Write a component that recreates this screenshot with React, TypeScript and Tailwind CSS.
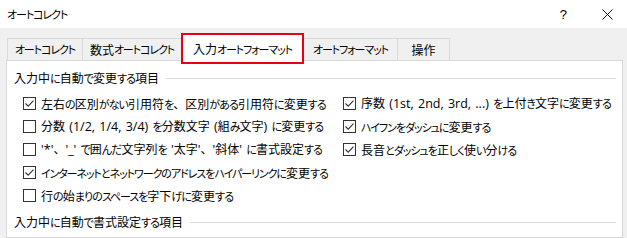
import React from "react";

function JP({ text }: { text: string }) {
  const parts = text.split(/([\u30A0-\u30FF]+|[\u3041-\u309F]+|[\x20-\x7E]+)/);
  return (
    <>
      {parts.map((p, i) => {
        if (p === "") return null;
        if (/^[\u30A0-\u30FF]+$/.test(p))
          return (
            <span key={i} className="text-[11px] tracking-[-1.1px] [font-feature-settings:'palt']">
              {p}
            </span>
          );
        if (/^[\u3041-\u309F]+$/.test(p))
          return (
            <span key={i} className="text-[11px] tracking-[-0.9px] [font-feature-settings:'palt']">
              {p}
            </span>
          );
        if (/^[\x20-\x7E]+$/.test(p))
          return (
            <span key={i} className="text-[12.5px] [word-spacing:1px]" style={{ fontFamily: '"Open Sans", sans-serif' }}>
              {p}
            </span>
          );
        return <span key={i}>{p}</span>;
      })}
    </>
  );
}

function Box({ checked }: { checked: boolean }) {
  return (
    <span className="w-[13px] h-[13px] border border-[#333333] bg-white flex items-center justify-center shrink-0">
      {checked && (
        <svg width="11" height="11" viewBox="0 0 11 11">
          <path d="M1.5 5.5 L4.2 8.2 L9.5 2.6" fill="none" stroke="#333333" strokeWidth="1.1" />
        </svg>
      )}
    </span>
  );
}

function Item({ checked, label }: { checked: boolean; label: string }) {
  return (
    <div className="flex items-center gap-[5px] h-[23px]">
      <Box checked={checked} />
      <span className="whitespace-nowrap">
        <JP text={label} />
      </span>
    </div>
  );
}

export default function App() {
  return (
    <div
      className="w-[627px] h-[238px] overflow-hidden bg-[#f0f0f0] text-black text-[12px] leading-none flex flex-col"
      style={{ fontFamily: '"Noto Sans CJK JP", "Noto Sans", sans-serif' }}
    >
      <div className="h-[28px] bg-white flex items-center justify-between pl-[7px] pr-[14px] shrink-0">
        <span>
          <JP text="オートコレクト" />
        </span>
        <div className="flex items-center gap-[35px]">
          <span className="text-[13px]" style={{ fontFamily: '"Liberation Sans", sans-serif' }}>?</span>
          <svg width="11" height="11" viewBox="0 0 11 11">
            <path d="M0.5 0.5 L10.5 10.5 M10.5 0.5 L0.5 10.5" stroke="#111" strokeWidth="1" />
          </svg>
        </div>
      </div>
      <div className="flex items-end pl-[7px] pt-[5px] shrink-0 h-[32px]">
        <div className="h-[22px] w-[75px] border-t border-l border-[#d9d9d9] bg-[#f0f0f0] flex items-center justify-center">
          <JP text="オートコレクト" />
        </div>
        <div className="h-[22px] w-[99px] border-t border-l border-[#d9d9d9] bg-[#f0f0f0] flex items-center justify-center">
          <JP text="数式オートコレクト" />
        </div>
        <div className="h-[31px] w-[123px] -mb-[4px] relative z-10 border-2 border-[#e60012] bg-white flex items-center justify-center pt-[1px]">
          <JP text="入力オートフォーマット" />
        </div>
        <div className="h-[22px] w-[94px] border-t border-r border-[#d9d9d9] bg-[#f0f0f0] flex items-center justify-center">
          <JP text="オートフォーマット" />
        </div>
        <div className="h-[22px] w-[52px] border-t border-r border-[#d9d9d9] bg-[#f0f0f0] flex items-center justify-center">
          操作
        </div>
      </div>
      <div className="flex-1 ml-[6px] mr-[4px] border border-[#d9d9d9] bg-white pt-[10px] pl-[7px] pr-[6px]">
        <div className="flex items-center gap-[7px] h-[14px]">
          <span className="whitespace-nowrap">
            <JP text="入力中に自動で変更する項目" />
          </span>
          <div className="flex-1 h-px bg-[#dcdcdc]" />
        </div>
        <div className="grid grid-cols-[320px_1fr] pl-[9px] mt-[7px]">
          <div className="flex flex-col">
            <Item checked label="左右の区別がない引用符を、区別がある引用符に変更する" />
            <Item checked={false} label="分数 (1/2, 1/4, 3/4) を分数文字 (組み文字) に変更する" />
            <Item checked={false} label="'*'、'_' で囲んだ文字列を '太字'、'斜体' に書式設定する" />
            <Item checked label="インターネットとネットワークのアドレスをハイパーリンクに変更する" />
            <Item checked={false} label="行の始まりのスペースを字下げに変更する" />
          </div>
          <div className="flex flex-col">
            <Item checked label="序数 (1st, 2nd, 3rd, ...) を上付き文字に変更する" />
            <Item checked label="ハイフンをダッシュに変更する" />
            <Item checked label="長音とダッシュを正しく使い分ける" />
          </div>
        </div>
        <div className="flex items-center gap-[7px] h-[14px] mt-[8px]">
          <span className="whitespace-nowrap">
            <JP text="入力中に自動で書式設定する項目" />
          </span>
          <div className="flex-1 h-px bg-[#dcdcdc]" />
        </div>
      </div>
    </div>
  );
}
